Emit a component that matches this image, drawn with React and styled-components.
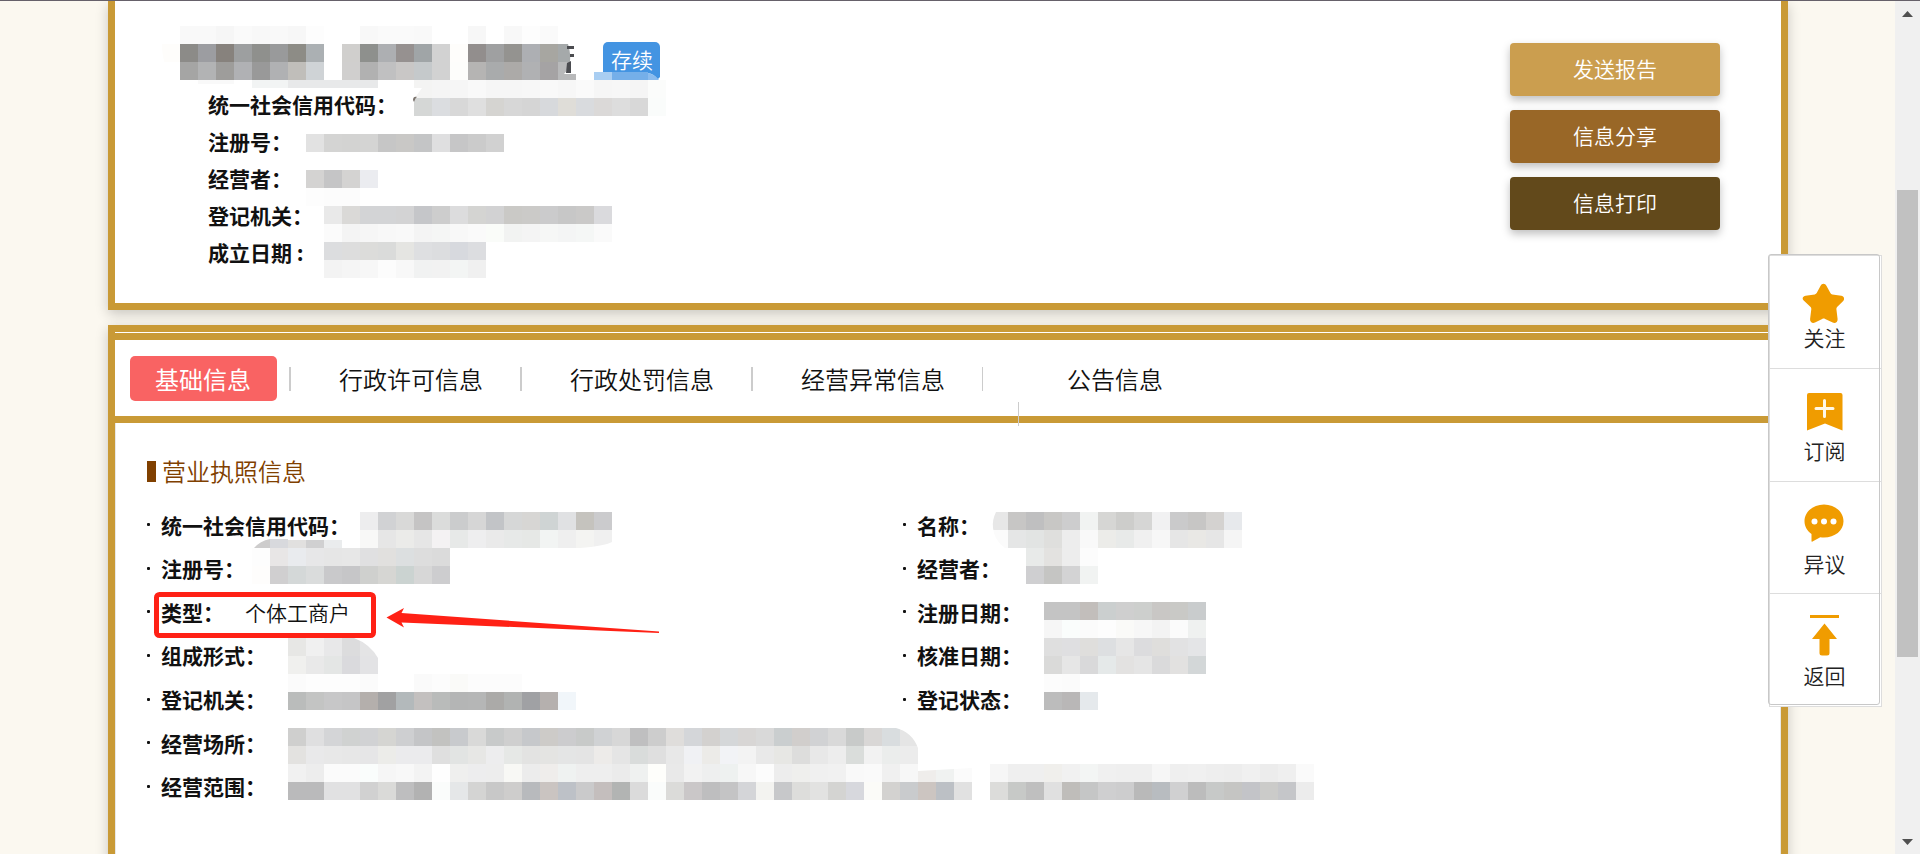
import React from "react";
import styled, { createGlobalStyle } from "styled-components";

const gold = "#c99a36";
const orange = "#f09c00";

const GlobalStyle = createGlobalStyle`
  * { box-sizing: border-box; }
  body {
    margin: 0;
    background: #fbf8f0;
    color: #111;
    font-family: "Noto Sans CJK SC", sans-serif;
    font-size: 21px;
    line-height: 30px;
    font-weight: 350;
  }
  h1, h2, dl, dt, dd, ul { margin: 0; padding: 0; font-size: inherit; }
  button { font: inherit; border: 0; cursor: pointer; }
`;

const Page = styled.div`
  position: relative;
  display: flex;
  height: 100vh;
  overflow: hidden;
  border-top: 1px solid #66616a;
`;

const Main = styled.main`
  flex: 1;
  display: flex;
  flex-direction: column;
  gap: 15px;
  padding: 0 107px 0 108px;
`;

const Panel = styled.section`
  position: relative;
  flex: none;
  border: 7px solid ${gold};
  background: #fff;
  box-shadow: 0 4px 12px rgba(0, 0, 0, 0.2);
`;

const SummaryPanel = styled(Panel)`
  display: flex;
  justify-content: space-between;
  border-top: 0;
  padding: 41px 61px 32px 65px;
`;

const InfoPanel = styled(Panel)`
  padding-top: 1px;
  min-height: 640px;
`;

const TitleRow = styled.h1`
  display: flex;
  margin-bottom: 6px;
`;

const NameSlot = styled.span`
  width: 423px;
`;

const StatusBadge = styled.span`
  padding: 2px 7px 6px 8px;
  border-radius: 5px;
  background: #4394e2;
  color: #fff;
  font-weight: 350;
`;

const SummaryList = styled.dl`
  padding-left: 28px;
`;

const SummaryItem = styled.div`
  padding: 3px 0 4px;
`;

const Label = styled.dt`
  font-weight: 700;
`;

const Actions = styled.div`
  display: flex;
  flex-direction: column;
  gap: 14px;
  padding-top: 1px;
`;

const ActionButton = styled.button`
  width: 210px;
  height: 53px;
  padding: 0 0 4px;
  border-radius: 4px;
  background: ${(p) => p.$color};
  color: #fff;
  box-shadow: 0 4px 8px rgba(0, 0, 0, 0.25);
`;

const TabBar = styled.nav`
  display: flex;
  align-items: center;
  height: 90px;
  padding: 0 15px;
  border: solid ${gold};
  border-width: 7px 0;
`;

const Tab = styled.button`
  height: 45px;
  padding: 2px ${(p) => (p.$active ? 26 : 25)}px 0 25px;
  border-radius: 5px;
  background: ${(p) => (p.$active ? "#f96363" : "transparent")};
  color: ${(p) => (p.$active ? "#fff" : "#111")};
  font-size: 24px;
  font-weight: ${(p) => (p.$active ? 400 : 350)};
`;

const Divider = styled.i`
  width: ${(p) => (p.$thin ? 1 : 2)}px;
  height: 24px;
  margin: ${(p) => (p.$low ? 0 : 2)}px 23px 0 12px;
  background: #ccc;
  ${(p) => p.$low && "align-self: flex-end; margin-bottom: -10px;"}
`;

const Content = styled.div`
  padding: 33px 121px 40px 31px;
  border: solid #e8e8e8;
  border-width: 0 1px;
  min-height: 540px;
`;

const SectionTitle = styled.h2`
  display: flex;
  align-items: center;
  gap: 6px;
  color: #804000;
  font-size: 24px;
  font-weight: 350;
  margin-bottom: 19px;

  &::before {
    content: "";
    width: 9px;
    height: 21px;
    background: #804000;
  }
`;

const Details = styled.div`
  position: relative;
`;

const DetailGrid = styled.dl`
  display: grid;
  grid-template-columns: 1fr 1fr;
  grid-auto-rows: 1fr;
  min-height: 305px;
`;

const DetailItem = styled.div`
  grid-column: ${(p) => p.$column};
  display: flex;
  align-items: center;
  padding-bottom: 4px;

  &::before {
    content: "";
    width: 3px;
    height: 3px;
    margin-right: 11px;
    border-radius: 1px;
    background: #111;
  }
`;

const Value = styled.dd`
  padding-left: 21px;
`;

const Overlay = styled.svg`
  position: absolute;
  top: ${(p) => p.$top}px;
  left: ${(p) => p.$left};
  width: 1px;
  height: 1px;
  overflow: visible;
  pointer-events: none;
`;

const SideMenu = styled.aside`
  position: absolute;
  top: 253px;
  right: 40px;
  width: 112px;
  height: 451px;

  &::after {
    content: "";
    position: absolute;
    inset: 0;
    border: 1px solid #c8c8c8;
    border-radius: 3px;
    pointer-events: none;
  }
`;

const SideList = styled.div`
  display: flex;
  flex-direction: column;
  width: 113px;
  height: 452px;
  margin: 1px 0 0 1px;
  border: solid #ddd;
  border-width: 0 1px 1px;
  background: #fff;
`;

const SideItem = styled.button`
  flex: 1;
  display: flex;
  flex-direction: column;
  align-items: center;
  padding: 20px 2px 0 0;
  border-top: 1px solid #ddd;
  background: transparent;
  color: #222;

  svg {
    flex: none;
    width: 48px;
    height: 48px;
    margin-bottom: -2px;
  }
`;

const ScrollRail = styled.div`
  width: 25px;
  display: flex;
  flex-direction: column;
  padding: 0 2px;
  background: #f0f0f0;
`;

const RailArrow = styled.svg`
  flex: none;
  width: 21px;
  height: 25px;
`;

const RailSpace = styled.div`
  flex: ${(p) => p.$grow};
`;

const RailThumb = styled.div`
  flex: 467;
  background: #c1c1c1;
`;

const CELL = 18;

function Mosaic({ rows }) {
  return rows.map(([row, col, colors]) =>
    colors.split(" ").map((c, i) =>
      c === "-" ? null : (
        <rect
          key={`${row}-${col}-${i}`}
          x={(col + i) * CELL}
          y={row * CELL}
          width={CELL}
          height={CELL}
          fill={`#${c}`}
          shapeRendering="crispEdges"
        />
      )
    )
  );
}

const summaryMosaic = [
  [0, 0, "f9f9f9 f9f9f9 f6f6f6 fafafa f8f8f8 f9f9f9 f7f7f7 fdfdfd - - f8f8f8 fafafa fafafa f9f9f9 - - f7f7f7 - f8f8f8 fdfdfd fafafa"],
  [1, -1, "fefdfb 8c8b88 9c9da1 87827d 9d9fa0 8f908d 999a9b 8d8c86 abb0b3 - d0cfcd 8e908d adafb2 969190 a0a5a7 d2d2d2 fefdfb 928e8d 9fa0a1 949390 adafb3 a7a6a1 a5a9aa"],
  [2, 0, "a5a5a4 b2b3b4 9e9d9b b0b1b4 999999 b0b1b3 c0beba cfd3d6 - d0cfce b1b1b1 c0c0c1 c9c7c6 c5c9cb d2d2d2 fdfdfb b5b4b3 a9abac acaaa8 b0b1b3 a5a3a4 b8b9ba"],
  [3, 13, "f4f4f3 f5f5f5 f6f6f6 f9f9f9 f6f6f6 f6f6f6 f7f7f7 f9f9f9 f7f7f7 fafafa f6f6f6 f7f7f7 f5f5f5 fbfcfb"],
  [4, 13, "d5d7d6 dbdde0 d8d8d8 dfdfdf d5d4d1 d7d7d7 d5d5d5 d7d9dc dfddd8 d9dbde dbd9d8 dddddd d8d8d8 fafcfb"],
  [6, 7, "e2e2e2 d4d4d3 d3d3d2 d4d4d3 c6c6c6 c9c8c6 c4c5c6 dfdfe0 c6c6c7 cbcbcb d1d1d1"],
  [8, 7, "d4d3d2 c5c5c6 d4d3d2 ebecf0"],
  [9, 7, "fdfdfd fcfcfc fcfcfc"],
  [10, 8, "e9e9e9 dad9d7 d3d4d6 d3d4d6 d3d3d4 c5c6c9 cdcdcd dcdcdd d4d4d2 d2d2d3 cac9c6 cbcac8 cbcbcc c7c7c7 cac9c8 dadadd"],
  [11, 8, "fbfbfb f4f4f4 f6f6f6 f8f8f8 f9f9f9 f4f4f4 f5f6f5 f8f8f8 fafafa fafcf9 f2f3f2 f4f4f4 f6f7f6 f4f5f5 f5f7f6 fafafa"],
  [12, 8, "dcdddf dddddd dcdcda dadbda e5e5e2 dedfe1 dcdddf d7d9de dcdde0"],
  [13, 8, "f3f3f3 f5f5f5 f7f7f7 fcfcfc f8f8f8 f1f2f2 f2f2f2 f3f5f4 f0f0f0"],
];

const leftMosaic = [
  [0, 6, "ededee d1d2d4 d9d9d8 c5c4c4 dbdcdb cbcccd d6d6d6 c2c4c7 d6d7d7 d7d6d4 cfd4d4 e0e1e3 c5c3be cbcbcd"],
  [1, 6, "f8f8f7 e6e6e6 ebebe9 e6e6e6 f4f2f3 e7e9e8 eeeeef eaeaea e7e9e8 e6e8e6 f2f4f3 efefef f4f4f2 f0f0f0"],
  [2, 0, "fdfdfd e8e6e6 e9ebee e7e7e8 e6e6e6 e7e7e7 e0e0e1 e1e0de dcdfe0 dddddd dbdbdb"],
  [3, 0, "fefdfc d0cfd0 d4d8d8 dadcdc c9c9cb c6c6c8 cfd0ce d6d6d3 cbd3d1 d7d7d7 cdcdcf"],
  [7, 2, "e7e7e5 f0f0f0 e8e8e9 dcdcdd e4e4e5"],
  [8, 2, "f0f0ee e9e9e9 e4e6e5 dadadd e3e3e5"],
  [9, 2, "fbfbfb fdfdfd fdfdfd fdfdfd fbfbfb - - fafafa fcfcfc fafaf8 fcfcfc fcfcfc fcfcfc"],
  [10, 2, "babcbb c3c4c3 c7c7c8 c5c5c6 b4afac a1a1a2 b3b9bb c3c0bf b9bbba b4b5b5 b5b6b6 abaaa8 b1b3b2 a0a1a4 b5b0ae f1f6fa"],
  [12, 2, "cfcfce dfdfe0 d4d5d7 d0d2d1 d1d2d4 d5d5d2 cecfd1 c4c5c7 c2c2c0 c8cacd d9d9d8 c8caca cfcfcf c6c8cb cdcbc8 ccccce c8cac9 d0d2d4 d7d7d7 bfbfc0 cdcdcd dfdddb d4d6d9 d3d1cf d5d7d9 d8d6d5 d9d9d9 cacecf d1cecc d1d2d4 d9d9d9 c8cac9 d9d7d6 d9dddf e5e5e5"],
  [13, 2, "e3e2e0 e9e9ea e8e8e8 e7e7e7 e6e6e7 ecece9 ebebed ebebed dfdfdf e2e4e3 e7e7e5 ededee e6e8e6 e3e3e2 e4e4e2 e4e5e5 e4e4e4 edebe9 e5e5e5 d9dcdb dfdfdf e8e8e8 f0f1f4 ecebe8 f2f3f6 f3f3f3 e9e9e9 e7e7e4 dddddc e8e8e8 ededed dadddb f2f2f2 ebedec ececec"],
  [14, 2, "f1f1f1 ededed fbfbfb fbfbfb fafdfc f6f6f6 f8f8f8 f3f3f3 fefefe efefee ededee ededed f8f8f5 ececec efedeb eff2f1 eeeeee eeeeee ebebeb eff1f0 fefefb e9e9e9 f2f2f2 eeefef eef1f0 f7f7f7 fcfcfc ededed efefed f0f0f0 f1f1f1 f9f9f9 fafafa f0f0f0 f7f7f7 efedeb f0f2f1 fbfbfb - f6f6f6 efefef efefef f0efec f1f1f1 f3f5f4 f0f0f0 efefef efefef f6f6f6 efefef f0f0f0 eeeeee ededed f0f0f0 ececec efefef fafafa"],
  [15, 2, "bababb bababb e1e1e2 e1e1e2 d1d1d1 dadad8 bebebf b2b2b2 fafcfb e5e7e8 d4d4d3 c8c8c8 cecdcc b8babd cac4c1 bdc1c7 cacacb c4bebd b2b4b3 dbdbdb fafcfb dbdbd9 cac7c8 bebebf c4c4c5 d4d5d8 f3f3f0 c7c8ca dddddb e2e2e1 d4d4d2 d7d8dd fbfbf8 d3d2d0 c9cbcd ccc5c1 bcc0c5 e1e1e1 - dcdcda c7c9c7 bfbfbf e0e0e0 bfbdba c5c6c6 cfcfd0 cdcdce b9b9b9 b8bcc0 d0d0d1 bcbcbc c7c9c8 c5c5c3 c3c4c8 cbcbc9 c5c6c9 ececec"],
];

const rightMosaic = [
  [0, 0, "e7e7e7 c7c6c5 bfbfc0 c8c7c5 cdcdce f1f3f2 d6d6d4 cdcdcb d6d6d5 f1f1f2 cacacb c7c6c5 d4d2d0 e7e9ec"],
  [1, 0, "fbfbfb e5e6e6 e2e4e3 dfdfdd ededed f9f9f9 ecece9 e8eae9 f0f0f0 f7f7f7 e6e6e6 e9e8e5 e6e6e6 f5f5f5"],
  [2, 2, "e8eae9 e3e2e0 ededed fcfcfc"],
  [3, 2, "cfcfd1 c5c5c3 d3d3d4 f1f3f2"],
  [5, 3, "c4c4c4 c4c4c4 c2bebb cbcfcf cfcfcf cdcfcd c9c7c5 c9c9c6 c9cccd"],
  [6, 3, "f6f6f6 fafdfc fbfbfb fdfdfd fafaf8 f7f7f7 f3f3f3 fbfbfb eff1f0"],
  [7, 3, "dfdfdf dfdfe1 dfdedc dddfe1 e6e6e6 dcdcde dfdedc e2e2e3 e4e5e7"],
  [8, 3, "dadad9 e6e6e6 d9d9da e5e9e9 e3e2e1 e5e5e5 dadadb e2e1e0 d3d7d8"],
  [9, 3, "fcfcfc fbfbfb"],
  [10, 3, "bcbcbc b9b7b7 e5e9ec"],
];

const summary = ["统一社会信用代码：", "注册号：", "经营者：", "登记机关：", "成立日期 :"];

const tabs = ["基础信息", "行政许可信息", "行政处罚信息", "经营异常信息"];

const details = [
  [1, "统一社会信用代码："],
  [2, "名称："],
  [1, "注册号："],
  [2, "经营者："],
  [1, "类型：", "个体工商户"],
  [2, "注册日期："],
  [1, "组成形式："],
  [2, "核准日期："],
  [1, "登记机关："],
  [2, "登记状态："],
  [1, "经营场所："],
  [1, "经营范围："],
];

const StarIcon = () => (
  <svg viewBox="0 0 48 48" fill={orange}>
    <path d="M22.5 7.7c1.3 0 2.3.8 2.9 2l4 7.4c.4.8 1 1.2 1.9 1.3l9 1.3c2.7.4 3.7 3.3 1.9 5.2l-6.1 6.2c-.6.6-.8 1.3-.7 2.1l1.2 9.7c.4 2.9-2.4 4.9-4.9 3.7l-7.6-3.7c-1-.5-1.9-.5-2.9 0l-7.2 3.6c-2.6 1.3-5.3-.8-4.9-3.600l1.200-9.700c.1-.8-.1-1.500-.7-2.100l-6.900-6.600c-1.900-1.900-.9-4.400 1.900-4.800l9.200-1.300c.9-.1 1.500-.6 1.900-1.300l3.900-7.400c.6-1.200 1.600-2 2.900-2z" />
  </svg>
);

const BookmarkIcon = () => (
  <svg viewBox="0 0 48 48">
    <path fill={orange} d="M8 4h31.500a2 2 0 0 1 2 2v35.500L24 34.500 6 41.500V6a2 2 0 0 1 2-2z" />
    <path stroke="#fff8e8" strokeWidth="3" strokeLinecap="round" d="M23.500 11.500v16M15 19.500h17" />
  </svg>
);

const CommentIcon = () => (
  <svg viewBox="0 0 48 48">
    <path fill={orange} d="M23 2.500c10.800 0 19.500 7.300 19.500 16.700S33.800 35.500 23 35.500c-1.300 0-2.500-.1-3.700-.3L11.500 39.500c-.8.400-1 .1-1-.6V32C6.300 29 3.500 24.500 3.500 19.200 3.500 9.800 12.200 2.500 23 2.500z" />
    <g fill="#fff">
      <circle cx="13.500" cy="19.500" r="3" />
      <circle cx="23" cy="19.500" r="3" />
      <circle cx="32.500" cy="19.500" r="3" />
    </g>
  </svg>
);

const TopIcon = () => (
  <svg viewBox="0 0 48 48" fill={orange}>
    <path d="M9 1h29v3H9zM23.500 9.500L36 25h-7.500v14a2.500 2.500 0 0 1-2.500 2.500h-5a2.500 2.500 0 0 1-2.500-2.500V25H11z" />
  </svg>
);

const sideItems = [
  ["关注", StarIcon],
  ["订阅", BookmarkIcon],
  ["异议", CommentIcon],
  ["返回", TopIcon],
];

export default function App() {
  return (
    <>
      <GlobalStyle />
      <Page>
        <Main>
          <SummaryPanel>
            <div>
              <TitleRow>
                <NameSlot />
                <StatusBadge>存续</StatusBadge>
              </TitleRow>
              <SummaryList>
                {summary.map((label) => (
                  <SummaryItem key={label}>
                    <Label>{label}</Label>
                  </SummaryItem>
                ))}
              </SummaryList>
            </div>
            <Actions>
              <ActionButton $color="#cb9e4f">发送报告</ActionButton>
              <ActionButton $color="#996727">信息分享</ActionButton>
              <ActionButton $color="#62491b">信息打印</ActionButton>
            </Actions>
            <Overlay $top={25} $left="65px" aria-hidden="true">
              <Mosaic rows={summaryMosaic} />
              <path fill="#f9f9f9" d="M18 54h36v4H18z" />
              <path fill="#f2f4f4" d="M72 54h36v8H72z" />
              <path fill="#e8e9ea" d="M108 54h90v8h-90z" />
              <path fill="#fff" d="M-18 18v36H0V54C-12 50-18 36-18 18zM388 18h8v30h-12c8-8 7-20 4-30zM234 62h8l-8 11z" />
              <path fill="#4b4c50" d="M387 20h7v3h-7zM390 28h4v3h-4zM387 37l4-2v12h-5z" />
              <path fill="#7a726c" d="M233 74c0-3 2-4 4-3-2 1-2 3-3 5z" />
              <path fill="#fff" d="M468 46h13v8h-13z" />
              <path fill="#a9cef2" d="M414 46h18v8h-18z" />
              <path fill="#75afe9" d="M432 46h36v8h-36z" />
              <path fill="#8bbcee" d="M468 47q8 2 11 7h-11z" />
              <path fill="#4394e2" d="M468 46h12v5l-2 2q-4-5-10-6z" />
            </Overlay>
          </SummaryPanel>

          <InfoPanel>
            <TabBar>
              {tabs.map((name, i) => (
                <React.Fragment key={name}>
                  <Tab $active={i === 0}>{name}</Tab>
                  <Divider $thin={i === 3} />
                </React.Fragment>
              ))}
              <Divider $thin $low />
              <Tab>公告信息</Tab>
            </TabBar>
            <Content>
              <SectionTitle>营业执照信息</SectionTitle>
              <Details>
                <DetailGrid>
                  {details.map(([column, label, value]) => (
                    <DetailItem key={label + column} $column={column}>
                      <Label>{label}</Label>
                      <Value>{value}</Value>
                    </DetailItem>
                  ))}
                </DetailGrid>
                <Overlay $top={7} $left="105px" aria-hidden="true">
                  <Mosaic rows={leftMosaic} />
                  <path fill="#cdcccc" d="M2 36q6-7 16-9v9z" />
                  <path fill="#d8d9dd" d="M18 27h18v9H18z" />
                  <path fill="#e1e0df" d="M36 28h18v8H36z" />
                  <path fill="#d0d0d1" d="M54 28h18v8H54z" />
                  <path fill="#eaeced" d="M72 28h18v8H72z" />
                  <path fill="#fff" d="M102 126h24v20q-8-14-24-20zM644 216h22v20q-6-16-22-20zM666 252h54v4l-54 3zM360 30v6h-32q24-2 32-6z" />
                </Overlay>
                <Overlay $top={7} $left="calc(50% + 87px)" aria-hidden="true">
                  <Mosaic rows={rightMosaic} />
                  <path fill="#fff" d="M0 0h6Q2 8 3 16q1 12 12 20H0z" />
                </Overlay>
                <Overlay $top={0} $left="0" aria-hidden="true">
                  <rect x="9.500" y="89.500" width="217" height="41" rx="3" fill="none" stroke="#ff2115" strokeWidth="5" />
                  <path fill="#ff2115" d="M239.500 112.500L257 103l-2.500 5L512 126.500v1.500L254.500 117.500l2.500 5z" />
                </Overlay>
              </Details>
            </Content>
          </InfoPanel>
        </Main>

        <ScrollRail aria-hidden="true">
          <RailArrow viewBox="0 0 21 25">
            <path fill="#505050" d="M5 16h11l-5.500-6z" />
          </RailArrow>
          <RailSpace $grow={164} />
          <RailThumb />
          <RailSpace $grow={172} />
          <RailArrow viewBox="0 0 21 25">
            <path fill="#505050" d="M5 10h11l-5.500 6z" />
          </RailArrow>
        </ScrollRail>

        <SideMenu>
          <SideList>
            {sideItems.map(([name, Icon]) => (
              <SideItem key={name}>
                <Icon />
                <span>{name}</span>
              </SideItem>
            ))}
          </SideList>
        </SideMenu>
      </Page>
    </>
  );
}
